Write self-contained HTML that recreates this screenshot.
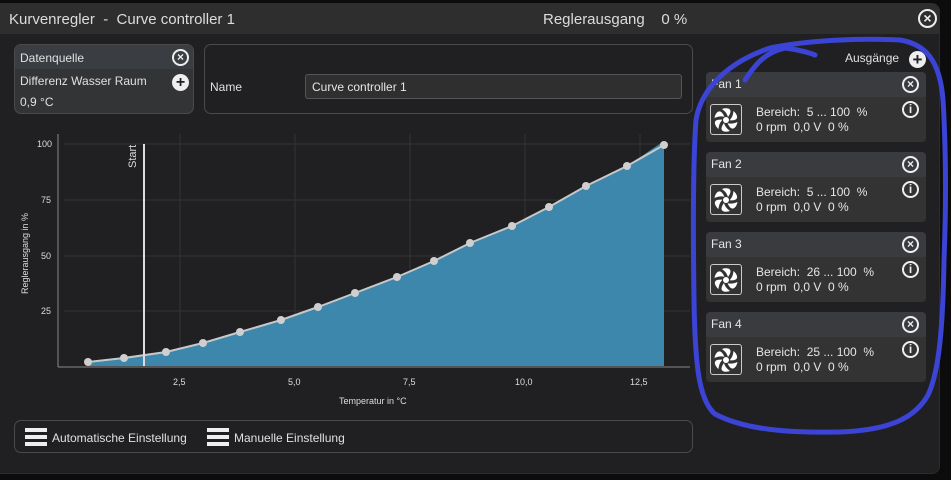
<!DOCTYPE html>
<html><head><meta charset="utf-8"><style>
*{margin:0;padding:0;box-sizing:border-box}
body{width:951px;height:480px;background:#0c0c0c;font-family:"Liberation Sans",sans-serif;color:#e6e6e6;position:relative;overflow:hidden}
.win{position:absolute;left:0;top:3px;width:940px;height:471px;background:#202022;border-radius:0 8px 8px 0;border-right:1px solid #2c2c2c;border-bottom:1px solid #2c2c2c}
.title{position:absolute;left:0;top:3px;width:939px;height:31px;background:#2e2e2f;border-radius:0 8px 0 0}
.t{position:absolute;font-size:15px;color:#dcdcdc}
.box{position:absolute;border:1px solid #4a4a4a;border-radius:7px}
.s{position:absolute;font-size:12px;color:#e0e0e0}
.card{position:absolute;left:706px;width:220px;height:70px;background:#333334;border-radius:4px;overflow:hidden}
.card .h{height:25px;background:#393b3e;padding:5px 5px;font-size:12px}
.fan{position:absolute;left:4px;top:32px;width:32px;height:31px;border:1px solid #ccc;border-radius:3px}
.card .a{position:absolute;left:50px;top:33px;font-size:12px;line-height:15px}
.ic{position:absolute;width:17px;height:17px;border:2px solid #eee;border-radius:50%;font-size:12px;font-weight:bold;text-align:center;line-height:13px;color:#eee}
.menu{position:absolute;width:22px;height:18px;border-top:4px solid #eee;border-bottom:4px solid #eee}
.menu:after{content:"";position:absolute;left:0;top:3px;width:22px;height:4px;background:#eee}
</style></head><body>
<div class="win"></div>
<div class="title"></div>
<div class="t" style="left:9px;top:11px">Kurvenregler&nbsp; - &nbsp;Curve controller 1</div>
<div class="t" style="left:543px;top:11px">Reglerausgang &nbsp;&nbsp; 0 %</div>
<div class="ic" style="left:918px;top:9px;width:19px;height:19px;font-size:14px;line-height:15px">×</div>

<div class="box" style="left:14px;top:44px;width:180px;height:70px;background:#333436"></div>
<div style="position:absolute;left:15px;top:45px;width:178px;height:24px;background:#3a3d41;border-radius:6px 6px 0 0"></div>
<div class="s" style="left:20px;top:51px">Datenquelle</div>
<div class="s" style="left:20px;top:74px">Differenz Wasser Raum</div>
<div class="s" style="left:20px;top:95px">0,9 °C</div>
<div class="ic" style="left:172px;top:49px">×</div>
<div style="position:absolute;left:172px;top:74px;width:17px;height:17px;border-radius:50%;background:#eee;color:#202022;font-weight:bold;font-size:16px;line-height:17px;text-align:center">+</div>

<div class="box" style="left:204px;top:44px;width:489px;height:70px"></div>
<div class="s" style="left:210px;top:80px">Name</div>
<div style="position:absolute;left:305px;top:74px;width:377px;height:25px;background:#2f2f30;border:1px solid #555;border-radius:3px;font-size:12px;padding:5px 6px">Curve controller 1</div>

<svg style="position:absolute;left:0;top:0" width="700" height="420">
<g stroke="#333" stroke-width="1">
<line x1="64" y1="144" x2="690" y2="144"/><line x1="64" y1="200" x2="690" y2="200"/><line x1="64" y1="256" x2="690" y2="256"/><line x1="64" y1="311" x2="690" y2="311"/>
<line x1="180" y1="134" x2="180" y2="363"/><line x1="295" y1="134" x2="295" y2="363"/><line x1="410" y1="134" x2="410" y2="363"/><line x1="525" y1="134" x2="525" y2="363"/><line x1="640" y1="134" x2="640" y2="363"/>
</g>
<polygon fill="#3d87ad" points="88,362 124,358 166,352 203,343 240,332 281,320 318,307 355,293 397,277 434,261 470,243 512,226 549,207 586,186 627,166 664,141 664,366 88,366"/>
<polyline fill="none" stroke="#c8c8c8" stroke-width="2" points="88,362 124,358 166,352 203,343 240,332 281,320 318,307 355,293 397,277 434,261 470,243 512,226 549,207 586,186 627,166 664,145"/>
<g fill="#cfcfcf">
<circle cx="88" cy="362" r="4"/><circle cx="124" cy="358" r="4"/><circle cx="166" cy="352" r="4"/><circle cx="203" cy="343" r="4"/><circle cx="240" cy="332" r="4"/><circle cx="281" cy="320" r="4"/><circle cx="318" cy="307" r="4"/><circle cx="355" cy="293" r="4"/><circle cx="397" cy="277" r="4"/><circle cx="434" cy="261" r="4"/><circle cx="470" cy="243" r="4"/><circle cx="512" cy="226" r="4"/><circle cx="549" cy="207" r="4"/><circle cx="586" cy="186" r="4"/><circle cx="627" cy="166" r="4"/><circle cx="664" cy="145" r="4"/></g>
<line x1="144" y1="144" x2="144" y2="366" stroke="#ddd" stroke-width="2"/>
<line x1="58" y1="134" x2="58" y2="367" stroke="#888"/><line x1="58" y1="367" x2="690" y2="367" stroke="#888"/>
<g font-size="9" fill="#ddd" font-family="Liberation Sans">
<text x="37" y="147">100</text><text x="41" y="203">75</text><text x="41" y="259">50</text><text x="41" y="314">25</text>
<text x="173" y="385">2,5</text><text x="288" y="385">5,0</text><text x="403" y="385">7,5</text><text x="515" y="385">10,0</text><text x="630" y="385">12,5</text>
<text x="339" y="404">Temperatur in °C</text>
<text transform="translate(28,294) rotate(-90)">Reglerausgang in %</text>
<text transform="translate(136,168) rotate(-90)" font-size="11">Start</text>
</g></svg>

<div class="box" style="left:14px;top:420px;width:679px;height:33px"></div>
<div class="menu" style="left:25px;top:428px"></div>
<div class="s" style="left:52px;top:431px">Automatische Einstellung</div>
<div class="menu" style="left:207px;top:428px"></div>
<div class="s" style="left:234px;top:431px">Manuelle Einstellung</div>

<div class="s" style="left:845px;top:51px">Ausgänge</div>
<div style="position:absolute;left:909px;top:51px;width:17px;height:17px;border-radius:50%;background:#eee;color:#202022;font-weight:bold;font-size:17px;line-height:17px;text-align:center">+</div>

<div class="card" style="top:72px"><div class="h">Fan 1</div><div class="fan"></div><div class="a">Bereich:&nbsp; 5 ... 100&nbsp; %<br>0 rpm&nbsp; 0,0 V&nbsp; 0 %</div><div class="ic" style="left:196px;top:4px">×</div><div class="ic" style="left:196px;top:29px">i</div></div>
<div class="card" style="top:152px"><div class="h">Fan 2</div><div class="fan"></div><div class="a">Bereich:&nbsp; 5 ... 100&nbsp; %<br>0 rpm&nbsp; 0,0 V&nbsp; 0 %</div><div class="ic" style="left:196px;top:4px">×</div><div class="ic" style="left:196px;top:29px">i</div></div>
<div class="card" style="top:232px"><div class="h">Fan 3</div><div class="fan"></div><div class="a">Bereich:&nbsp; 26 ... 100&nbsp; %<br>0 rpm&nbsp; 0,0 V&nbsp; 0 %</div><div class="ic" style="left:196px;top:4px">×</div><div class="ic" style="left:196px;top:29px">i</div></div>
<div class="card" style="top:312px"><div class="h">Fan 4</div><div class="fan"></div><div class="a">Bereich:&nbsp; 25 ... 100&nbsp; %<br>0 rpm&nbsp; 0,0 V&nbsp; 0 %</div><div class="ic" style="left:196px;top:4px">×</div><div class="ic" style="left:196px;top:29px">i</div></div>

<svg style="position:absolute;left:0;top:0" width="951" height="480">
<defs><path id="bl" d="M2,-3 C8,-11 2,-13 -4,-11 C0,-8 1,-6 2,-3Z" fill="#fff"/></defs>
<g fill="#fff">
<g transform="translate(726,120)"><circle r="3"/><use href="#bl"/><use href="#bl" transform="rotate(60)"/><use href="#bl" transform="rotate(120)"/><use href="#bl" transform="rotate(180)"/><use href="#bl" transform="rotate(240)"/><use href="#bl" transform="rotate(300)"/></g>
<g transform="translate(726,200)"><circle r="3"/><use href="#bl"/><use href="#bl" transform="rotate(60)"/><use href="#bl" transform="rotate(120)"/><use href="#bl" transform="rotate(180)"/><use href="#bl" transform="rotate(240)"/><use href="#bl" transform="rotate(300)"/></g>
<g transform="translate(726,280)"><circle r="3"/><use href="#bl"/><use href="#bl" transform="rotate(60)"/><use href="#bl" transform="rotate(120)"/><use href="#bl" transform="rotate(180)"/><use href="#bl" transform="rotate(240)"/><use href="#bl" transform="rotate(300)"/></g>
<g transform="translate(726,360)"><circle r="3"/><use href="#bl"/><use href="#bl" transform="rotate(60)"/><use href="#bl" transform="rotate(120)"/><use href="#bl" transform="rotate(180)"/><use href="#bl" transform="rotate(240)"/><use href="#bl" transform="rotate(300)"/></g>
</g>
<g fill="none" stroke="#3b44d4" stroke-width="5" stroke-linecap="round">
<path d="M745,80 C755,65 765,52 785,48 C800,50 810,53 815,55"/>
<path d="M770,48 C810,40 860,38 900,40 C925,44 940,60 943,100 C946,150 946,210 944,260 C943,320 940,370 928,395 C915,418 890,430 840,432 C790,433 745,430 715,414 C698,400 695,360 694,300 C693,230 693,160 696,120 C700,95 720,65 770,48"/>
</g></svg>
</body></html>
